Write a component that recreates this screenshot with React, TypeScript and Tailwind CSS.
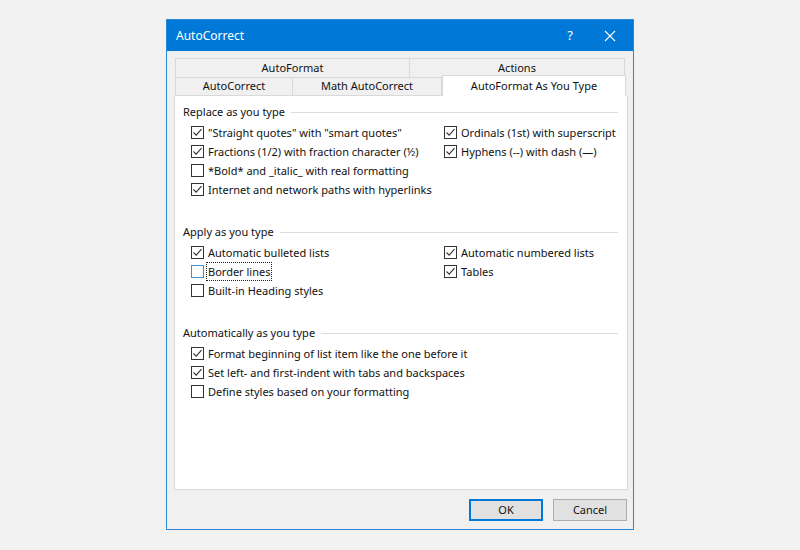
import React from "react";

const font = { fontFamily: '"Noto Sans", "Segoe UI", Arial, sans-serif' };

function Box({ checked, focus }: { checked: boolean; focus?: boolean }) {
  return (
    <div
      className={`w-[13px] h-[13px] shrink-0 bg-white border ${
        focus ? "border-[#3a8fd8]" : "border-[#333333]"
      } flex items-center justify-center`}
    >
      {checked && (
        <svg width="11" height="11" viewBox="0 0 11 11">
          <path d="M1.5 5.5 L4.2 8.2 L9.5 2.2" fill="none" stroke="#333" strokeWidth="1.1" />
        </svg>
      )}
    </div>
  );
}

function Item({ label, checked, focus }: { label: string; checked: boolean; focus?: boolean }) {
  return (
    <div className="h-[19px] flex items-center">
      <Box checked={checked} focus={focus} />
      <span
        className={`ml-[2px] text-[11px] leading-[17px] text-[#111] whitespace-nowrap px-[1px] border ${
          focus ? "border-dotted border-[#222]" : "border-transparent"
        }`}
      >
        {label}
      </span>
    </div>
  );
}

function Header({ label }: { label: string }) {
  return (
    <div className="h-[16px] flex items-center">
      <span className="text-[11px] leading-[16px] text-[#111] whitespace-nowrap">{label}</span>
      <div className="flex-1 h-px bg-[#dcdcdc] ml-[6px]" />
    </div>
  );
}

type It = { label: string; checked: boolean; focus?: boolean };

function Group({ title, left, right, first }: { title: string; left: It[]; right: It[]; first?: boolean }) {
  return (
    <div className={first ? "" : "mt-[25px]"}>
      <Header label={title} />
      <div className="flex mt-[3px] pl-[8px]">
        <div className="w-[253px] shrink-0 flex flex-col">
          {left.map((i) => (
            <Item key={i.label} {...i} />
          ))}
        </div>
        <div className="flex flex-col">
          {right.map((i) => (
            <Item key={i.label} {...i} />
          ))}
        </div>
      </div>
    </div>
  );
}

export default function App() {
  return (
    <div className="w-[800px] h-[550px] bg-[#f2f2f2] flex justify-center pt-[19px]" style={font}>
      <div className="w-[468px] h-[511px] border border-[#2d89d6] bg-[#f0f0f0] flex flex-col">
        <div className="h-[31px] bg-[#0078d7] flex items-center pl-[9px] pt-[1px] text-white">
          <span className="text-[12px]">AutoCorrect</span>
          <div className="flex-1" />
          <span className="text-[13px] w-[20px] text-center mr-[24px]">?</span>
          <svg width="12" height="12" viewBox="0 0 12 12" className="mr-[17px]">
            <path d="M1 1 L11 11 M11 1 L1 11" stroke="white" strokeWidth="1.1" />
          </svg>
        </div>
        <div className="flex-1 flex flex-col pl-[7px] pr-[6px] pt-[7px]">
          <div className="flex h-[19px] text-[11px] text-[#111] pl-px">
            <div className="w-[235px] border border-[#d9d9d9] border-b-0 flex items-center justify-center">AutoFormat</div>
            <div className="w-[215px] border border-[#d9d9d9] border-l-0 border-b-0 flex items-center justify-center">Actions</div>
          </div>
          <div className="flex h-[19px] text-[11px] text-[#111] pl-px relative">
            <div className="w-[118px] border border-[#d9d9d9] flex items-center justify-center">AutoCorrect</div>
            <div className="w-[149px] border border-[#d9d9d9] border-l-0 flex items-center justify-center">Math AutoCorrect</div>
            <div className="w-[184px] h-[21px] -mt-[2px] bg-white border border-[#d9d9d9] border-b-0 flex items-center justify-center z-10">
              AutoFormat As You Type
            </div>
          </div>
          <div className="h-[394px] w-[454px] bg-white border border-[#d9d9d9] border-t-0 pl-[8px] pr-[9px] pt-[8px]">
            <Group
              first
              title="Replace as you type"
              left={[
                { label: '"Straight quotes" with "smart quotes"', checked: true },
                { label: "Fractions (1/2) with fraction character (½)", checked: true },
                { label: "*Bold* and _italic_ with real formatting", checked: false },
                { label: "Internet and network paths with hyperlinks", checked: true },
              ]}
              right={[
                { label: "Ordinals (1st) with superscript", checked: true },
                { label: "Hyphens (--) with dash (—)", checked: true },
              ]}
            />
            <Group
              title="Apply as you type"
              left={[
                { label: "Automatic bulleted lists", checked: true },
                { label: "Border lines", checked: false, focus: true },
                { label: "Built-in Heading styles", checked: false },
              ]}
              right={[
                { label: "Automatic numbered lists", checked: true },
                { label: "Tables", checked: true },
              ]}
            />
            <Group
              title="Automatically as you type"
              left={[
                { label: "Format beginning of list item like the one before it", checked: true },
                { label: "Set left- and first-indent with tabs and backspaces", checked: true },
                { label: "Define styles based on your formatting", checked: false },
              ]}
              right={[]}
            />
          </div>
          <div className="flex justify-end mt-[9px]">
            <button className="w-[74px] h-[22px] border-2 border-[#0078d7] bg-[#e1e1e1] text-[11px] text-[#111] flex items-center justify-center">
              OK
            </button>
            <button className="w-[74px] h-[22px] ml-[10px] border border-[#adadad] bg-[#e1e1e1] text-[11px] text-[#111] flex items-center justify-center">
              Cancel
            </button>
          </div>
        </div>
      </div>
    </div>
  );
}
